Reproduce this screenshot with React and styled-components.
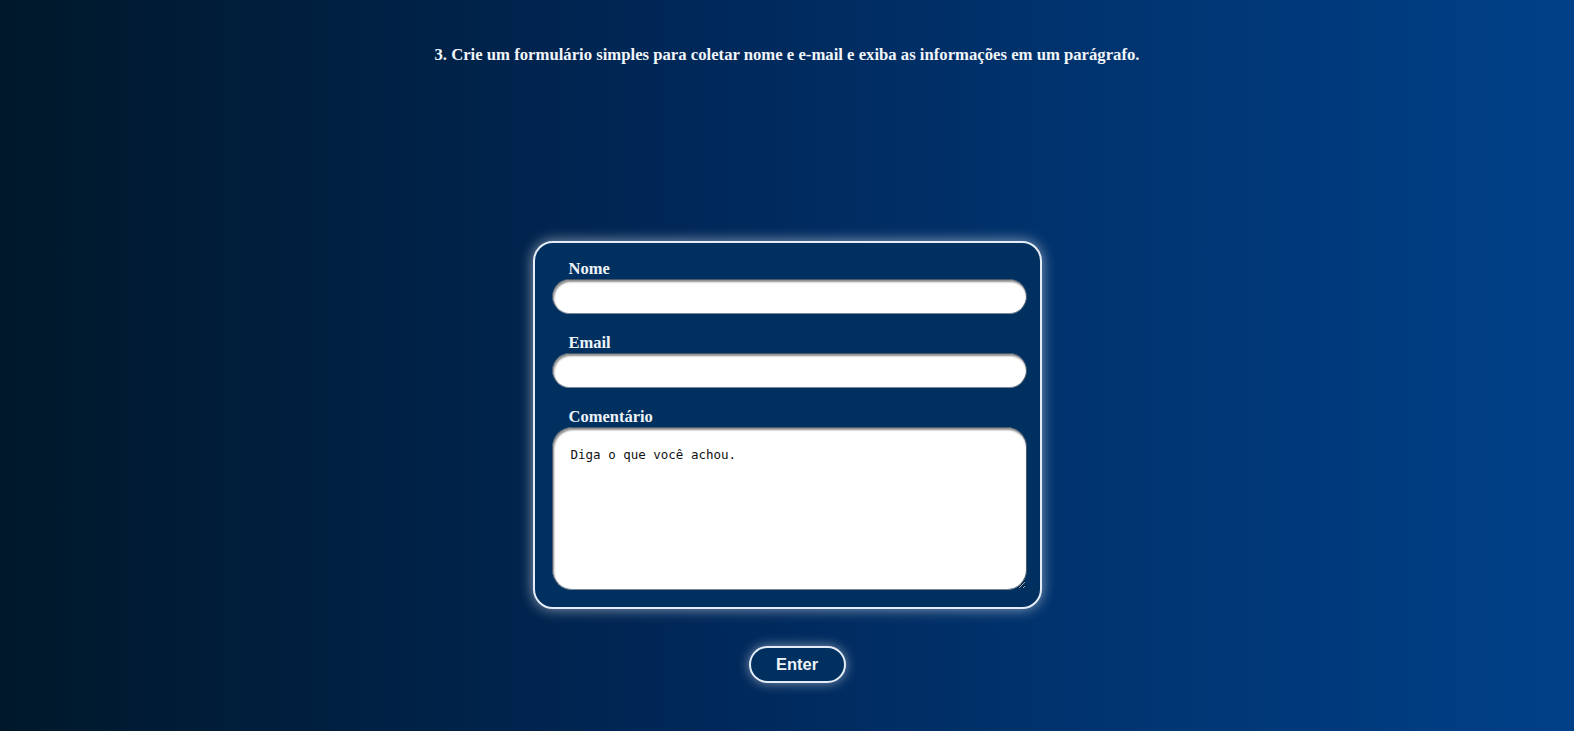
import React from 'react'
import styled, { createGlobalStyle } from 'styled-components'

const GlobalStyle = createGlobalStyle`
  html, body {
    margin: 0;
    padding: 0;
  }
  body {
    min-height: 100vh;
    background: linear-gradient(90deg, #00182a 0%, #00285a 45%, #003470 70%, #004088 100%);
    font-family: "Liberation Serif", "Times New Roman", serif;
  }
`

function App() {
  return (
    <>
      <GlobalStyle />
      <Page>
        <Title>
          3. Crie um formulário simples para coletar nome e e-mail e exiba as informações em um parágrafo.
        </Title>

        <Form onSubmit={(e) => e.preventDefault()}>
          <Field>
            <Label htmlFor="nome">Nome</Label>
            <Input id="nome" type="text" />
          </Field>
          <Field>
            <Label htmlFor="email">Email</Label>
            <Input id="email" type="email" />
          </Field>
          <Field $last>
            <Label htmlFor="comentario">Comentário</Label>
            <TextArea id="comentario" placeholder="Diga o que você achou." />
          </Field>
        </Form>

        <Button type="button">Enter</Button>
      </Page>
    </>
  )
}

const Page = styled.div`
  min-height: 100vh;
  display: flex;
  flex-direction: column;
  align-items: center;
  box-sizing: border-box;
  padding-top: 46px;
`

const Title = styled.h3`
  margin: 0;
  font-size: 16.7px;
  line-height: 18px;
  font-weight: bold;
  color: #f2f5fa;
  text-align: center;
`

const Form = styled.form`
  margin-top: 177px;
  width: 509px;
  box-sizing: border-box;
  padding: 17px 13px 17px 17px;
  background: #00305f;
  border: 2px solid #e4edf7;
  border-radius: 20px;
  box-shadow: 0 0 14px rgba(255, 255, 255, 0.55);
  display: flex;
  flex-direction: column;
`

const Field = styled.div`
  display: flex;
  flex-direction: column;
  margin-bottom: ${(p) => (p.$last ? '0' : '20px')};
`

const Label = styled.label`
  padding-left: 17px;
  margin-bottom: 1px;
  font-size: 16.5px;
  line-height: 18px;
  font-weight: bold;
  color: #eef3f8;
`

const Input = styled.input`
  width: 475px;
  height: 35px;
  box-sizing: border-box;
  border: 1px solid #4a5a6c;
  border-bottom-color: #7a8896;
  border-radius: 18px;
  background: #fff;
  box-shadow: inset 1px 2px 2px rgba(0, 0, 0, 0.45);
  padding: 0 16px;
  outline: none;
`

const TextArea = styled.textarea`
  width: 475px;
  height: 163px;
  box-sizing: border-box;
  border: 1px solid #4a5a6c;
  border-bottom-color: #7a8896;
  border-radius: 20px;
  background: #fff;
  box-shadow: inset 1px 2px 2px rgba(0, 0, 0, 0.45);
  padding: 19px 18px;
  font-family: "DejaVu Sans Mono", "Liberation Mono", monospace;
  font-size: 12.5px;
  outline: none;

  &::placeholder {
    color: #111;
    opacity: 1;
  }
`

const Button = styled.button`
  margin-top: 37px;
  margin-left: 20px;
  width: 97px;
  height: 37px;
  border: 2px solid #e4edf7;
  border-radius: 19px;
  background: #00305f;
  color: #eef3f8;
  font-family: "Liberation Sans", Arial, sans-serif;
  font-size: 16.5px;
  font-weight: bold;
  box-shadow: 0 0 12px rgba(255, 255, 255, 0.5);
  cursor: pointer;
`

export default App
